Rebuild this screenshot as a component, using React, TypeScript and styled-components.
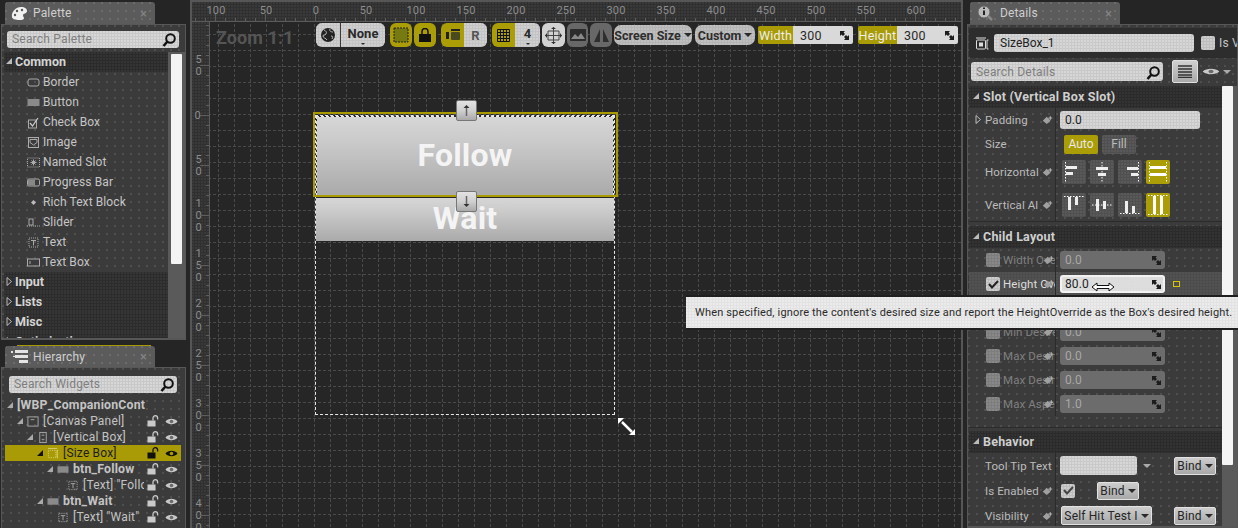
import React from "react";
import styled, { createGlobalStyle, css } from "styled-components";

const Global = createGlobalStyle`
  html, body { margin: 0; padding: 0; background: #252525; }
  body { font-family: Roboto, "Liberation Sans", sans-serif; }
  #root { width: 1238px; height: 528px; overflow: hidden; }
`;

const speckle = css`
  background-image: radial-gradient(circle at 1px 1px, rgba(255,255,255,.16) 0.6px, transparent 0.9px);
  background-size: 8px 8px;
`;
const weave = (c: string) => css`
  background-image: radial-gradient(circle at 1px 1px, ${c} 0.6px, transparent 0.9px);
  background-size: 3px 3px;
`;

const Root = styled.div`
  position: relative;
  width: 1238px; height: 528px; overflow: hidden;
  background: #252525;
  display: grid;
  grid-template-columns: 186px 4px 773px 3px 272px;
`;
const Column = styled.div`
  display: flex; flex-direction: column; height: 528px; overflow: hidden; min-width: 0;
`;
const TabBar = styled.div<{ $top: number; $left: number; $h?: number; $focus?: boolean }>`
  flex: none; position: relative;
  margin: ${p => p.$top}px 0 0 ${p => p.$left}px;
  width: 150px; height: ${p => p.$h ?? 22}px; box-sizing: border-box;
  background-color: #5b5b5b;
  ${speckle}
  border-radius: 3px 3px 0 0;
  display: flex; align-items: center; padding: 0 8px 0 6px; gap: 5px;
  color: #cfcfcf; font-size: 12px; letter-spacing: .15px;
  ${p => p.$focus && css`
    &::before { content: ""; position: absolute; left: 12px; right: 4px; top: -1px; height: 1px; background: #a89a00; }
  `}
`;
const TabLabel = styled.span` flex: 1; `;
const TabClose = styled.span` color: #858585; font-size: 13px; line-height: 1; `;
const Panel = styled.div<{ $h?: number; $ml?: number }>`
  flex: none; box-sizing: border-box;
  margin-left: ${p => p.$ml ?? 1}px;
  height: ${p => p.$h}px;
  background-color: #3b3b3b;
  ${speckle}
  border: 1px solid #575757; border-bottom-width: 2px;
  position: relative; overflow: hidden;
`;
const SearchBox = styled.div<{ $ml: number; $w: number; $mt: number; $h?: number; $pb?: number }>`
  margin: ${p => p.$mt}px 0 0 ${p => p.$ml}px;
  width: ${p => p.$w}px; height: ${p => p.$h ?? 17}px; box-sizing: border-box; flex: none;
  background-color: #c8c8c8;
  ${weave("#e0e0e0")}
  border-radius: 3px;
  display: flex; align-items: center; justify-content: space-between;
  padding: 0 2px ${p => p.$pb ?? 2}px 5px;
  color: #7f7f7f; font-size: 12px; letter-spacing: .2px;
`;

/* ---------- palette ---------- */
const PaletteBody = styled.div`
  display: flex; margin: 4px 0 0 2px; height: 286px; overflow: hidden;
`;
const PaletteList = styled.div` width: 164px; flex: none; `;
const CategoryRow = styled.div<{ $open?: boolean }>`
  height: 20px; display: flex; align-items: center; gap: 2px; padding: 0 0 2px 1px; box-sizing: border-box;
  font-size: 12.5px; font-weight: 700; color: #d4d4d4;
  background-color: ${p => (p.$open ? "#2b2b2b" : "#2c2c2c")};
  ${weave("#3a3a3a")}
`;
const PaletteItem = styled.div`
  height: 20px; display: flex; align-items: center; padding-left: 23px; gap: 3px;
  font-size: 12px; color: #c6c6c6; letter-spacing: .1px;
`;
const IconSlot = styled.span<{ $w?: number }>`
  width: ${p => p.$w ?? 13}px; height: 14px; flex: none; display: inline-flex; align-items: center; justify-content: center;
`;
const ScrollTrack = styled.div<{ $w: number; $flush?: boolean }>`
  flex: 1; min-width: 0; background: #5a5a5a; box-sizing: border-box;
  padding: ${p => (p.$flush ? "0" : "2px 0 0 3px")};
  width: ${p => p.$w}px;
`;
const ScrollThumb = styled.div<{ $h: number; $w?: number }>`
  width: ${p => p.$w ?? 11}px; height: ${p => p.$h}px; background: #f4f4f4; border-radius: 1px;
`;

/* ---------- hierarchy ---------- */
const TreeList = styled.div` margin: 4px 0 0 3px; width: 176px; `;
const TreeRow = styled.div<{ $sel?: boolean }>`
  height: 16px; display: flex; align-items: center; padding-right: 3px;
  font-size: 12px; color: ${p => (p.$sel ? "#1d1d1d" : "#c4c4c4")};
  background: ${p => (p.$sel ? "#a99b05" : "transparent")};
`;
const TreeTwist = styled.span<{ $lvl: number }>`
  margin-left: ${p => 1 + 10 * p.$lvl}px; display: inline-flex; flex: none; width: 8px; justify-content: center;
  margin-right: 3px;
`;
const TreeName = styled.span<{ $bold?: boolean; $gap: number }>`
  flex: 1; min-width: 0; white-space: nowrap; overflow: hidden; margin: 0 3px 0 ${p => p.$gap}px;
  font-weight: ${p => (p.$bold ? 700 : 400)};
  font-size: ${p => (p.$bold ? 12.3 : 12)}px;
  letter-spacing: .2px;
`;
const TreeActions = styled.span` display: inline-flex; gap: 6px; flex: none; align-items: center; `;

/* ---------- canvas ---------- */
const Canvas = styled.div`
  display: grid; grid-template-columns: 18px 1fr; grid-template-rows: 20px 1fr;
  height: 528px; box-sizing: border-box; border: 2px solid #565656; border-bottom: 0;
  background: #262626; overflow: hidden; position: relative;
`;
const RulerCorner = styled.div`
  background-color: #333;
  border-right: 1px solid #555; border-bottom: 1px solid #555;
  position: relative;
  &::before {
    content: ""; position: absolute; left: 0; top: 0;
    border-style: solid; border-width: 7px 7px 0 0;
    border-color: #a89a00 transparent transparent transparent;
  }
`;
const rulerDots = "radial-gradient(circle at 1px 1px, #3f3f3f 0.6px, transparent 0.9px)";
const rulerBase = css`
  background-color: #303030; color: #8c8c8c; font-size: 11px; overflow: hidden;
`;
const TopRuler = styled.div`
  ${rulerBase}
  grid-column: 2;
  margin-left: -18px;
  display: flex;
  position: relative;
  border-bottom: 1px solid #5a5a5a;
  background-image: ${rulerDots};
  background-size: 3px 3px;
  z-index: 1;
`;
const Tick = styled.i<{ $major?: boolean; $x: number }>`
  position: absolute; bottom: 0; left: ${p => p.$x}px; width: 1px; height: ${p => (p.$major ? 7 : 3)}px; background: #5d5d5d;
`;
const TopRulerLabel = styled.span<{ $first?: boolean }>`
  width: 50px; flex: none; text-align: center; line-height: 17px;
  letter-spacing: .1px;
  ${p => p.$first && "margin-left: -1px;"}
`;
const LeftRuler = styled.div`
  ${rulerBase}
  position: relative;
  display: flex; flex-direction: column; align-items: center; padding-top: 19px;
  border-right: 1px solid #5a5a5a; box-sizing: border-box;
  background-image: ${rulerDots};
  background-size: 3px 3px;
`;
const LeftTick = styled.i<{ $major?: boolean; $y: number }>`
  position: absolute; right: 0; top: ${p => p.$y}px; height: 1px; width: ${p => (p.$major ? 9 : 3)}px; background: #5d5d5d;
`;
const LeftRulerLabel = styled.span`
  height: 50px; flex: none; width: 8px; margin-left: -4px; display: flex; align-items: center; text-align: center;
  word-break: break-all; line-height: 12px;
`;
const Viewport = styled.div`
  position: relative; overflow: hidden;
`;
const GridArt = styled.svg` position: absolute; inset: 0; width: 100%; height: 100%; `;
const Toolbar = styled.div`
  position: absolute; left: 6px; top: 1px; right: 0; display: flex; align-items: center; height: 24px;
`;
const ZoomText = styled.span`
  width: 100px; flex: none; font-size: 18px; font-weight: 700; color: #555; letter-spacing: .1px; margin-top: 4px;
`;
const BtnGroup = styled.div<{ $ml: number }>`
  display: flex; margin-left: ${p => p.$ml}px; height: 24px; border-radius: 6px; overflow: hidden; flex: none;
`;
const ToolBtn = styled.div<{ $w: number; $kind?: "on" | "dim" | "off"; $cap?: boolean; $plain?: boolean; $divider?: boolean; $soft?: boolean }>`
  width: ${p => p.$w}px; height: 24px; flex: none; position: relative; box-sizing: border-box;
  display: flex; align-items: center; justify-content: center;
  font-size: 13px; font-weight: 700; color: ${p => (p.$soft ? "#555" : "#2a2a2a")};
  ${p => p.$cap && "padding-bottom: 4px;"}
  ${p => p.$divider && "border-left: 1px solid #3a3a3a;"}
  background-color: ${p => (p.$kind === "on" ? "#ab9d05" : p.$kind === "dim" ? "#686868" : p.$plain ? "#d2d2d2" : "#c4c4c4")};
  ${p => (!p.$kind && !p.$plain ? weave("#d6d6d6") : "")}
`;
const Caret = styled.span<{ $c?: string; $ml?: number }>`
  display: inline-block; width: 0; height: 0; margin-left: ${p => p.$ml ?? 2}px; flex: none;
  border-left: 4px solid transparent; border-right: 4px solid transparent;
  border-top: 4px solid ${p => p.$c ?? "#2a2a2a"};
`;
const SmallCaret = styled.span`
  position: absolute; bottom: 2px; left: 50%; margin-left: -2px; width: 0; height: 0;
  border-left: 2px solid transparent; border-right: 2px solid transparent; border-top: 2px solid #2a2a2a;
`;
const Pill = styled.div<{ $w: number; $ml: number }>`
  width: ${p => p.$w}px; margin-left: ${p => p.$ml}px; height: 20px; border-radius: 7px; flex: none;
  background-color: #b4b4b4; ${weave("#c6c6c6")}
  display: flex; align-items: center; justify-content: center; gap: 1px; white-space: nowrap;
  font-size: 12.5px; font-weight: 700; color: #2d2d2d;
`;
const SizeField = styled.div<{ $ml: number; $lw: number; $w: number }>`
  display: grid; grid-template-columns: ${p => p.$lw}px ${p => p.$w}px; margin-left: ${p => p.$ml}px;
  height: 18px; border-radius: 2px; overflow: hidden; flex: none;
  font-size: 12.5px; letter-spacing: .2px;
`;
const SizeLabel = styled.span`
  background: #a99b05; color: #eee; display: flex; align-items: center; justify-content: center;
`;
const SizeValue = styled.span`
  background: #d9d9d9; color: #2a2a2a; display: flex; align-items: center; justify-content: space-between;
  padding: 0 4px 0 7px;
`;

const DesignBox = styled.div`
  position: absolute; left: 105px; top: 93px; width: 300px; height: 300px; box-sizing: border-box;
  border: 1px dashed #e8e8e8;
  display: flex; flex-direction: column;
`;
const GameButton = styled.div<{ $h: number; $fs: number; $pb: number }>`
  height: ${p => p.$h}px; flex: none; box-sizing: border-box; padding-bottom: ${p => p.$pb}px;
  background: linear-gradient(#d6d6d6 0%, #cdcdcd 25%, #bdbdbd 60%, #aaa 100%);
  display: flex; align-items: center; justify-content: center;
  color: #f4f4f4; font-weight: 700; font-size: ${p => p.$fs}px; letter-spacing: .2px;
`;
const FollowSlot = styled.div`
  height: 80px; flex: none; display: flex; flex-direction: column; box-sizing: border-box;
  border: 1px dashed #e8e8e8; margin-bottom: 2px;
`;
const Selection = styled.div`
  position: absolute; left: 103px; top: 90px; width: 305px; height: 85px; box-sizing: border-box;
  border: 2px solid #a89a00; pointer-events: none;
`;
const Handle = styled.div<{ $top: number }>`
  position: absolute; left: 246px; top: ${p => p.$top}px; width: 21px; height: 21px; box-sizing: border-box;
  background: linear-gradient(#e2e2e2, #d0d0d0 50%, #a9a9a9);
  border: 1px solid #777; border-radius: 2px;
  display: flex; align-items: center; justify-content: center;
`;
const ResizeArt = styled.svg`
  position: absolute; left: 408px; top: 396px;
`;

/* ---------- details ---------- */
const NameRow = styled.div`
  margin: 3px 0 0 1px; height: 30px; border-radius: 3px 0 0 3px; background: #2d2d2d;
  display: flex; align-items: center; padding-left: 6px; gap: 4px; overflow: hidden;
`;
const NameInput = styled.div`
  width: 200px; height: 18px; flex: none; box-sizing: border-box; border-radius: 3px;
  background-color: #c9c9c9; ${weave("#dedede")}
  font-size: 12px; color: #222; display: flex; align-items: center; padding-left: 6px;
`;
const CheckBox = styled.span<{ $on?: boolean; $dim?: boolean; $ml?: number }>`
  width: 14px; height: 14px; flex: none; display: inline-flex; align-items: center; justify-content: center; border-radius: 2px;
  margin-left: ${p => p.$ml ?? 0}px;
  background-color: ${p => (p.$dim ? "#7d7d7d" : "#bdbdbd")};
  ${p => weave(p.$dim ? "#8f8f8f" : "#d6d6d6")}
`;
const ClipLabel = styled.span<{ $c?: string; $fs?: number }>`
  white-space: nowrap; font-size: ${p => p.$fs ?? 12}px; color: ${p => p.$c ?? "#c4c4c4"}; letter-spacing: .15px;
`;
const SearchRow = styled.div`
  display: flex; align-items: center; height: 23px; margin-top: 2px;
`;
const ViewBtn = styled.div`
  width: 26px; height: 23px; margin-left: 9px; flex: none; box-sizing: border-box;
  background: linear-gradient(#cfcfcf, #a9a9a9); border: 1px solid #e0e0e0; border-radius: 2px;
  display: flex; align-items: center; justify-content: center;
`;
const EyeWrap = styled.div` display: flex; align-items: center; margin-left: 4px; gap: 1px; `;
const DetailsBody = styled.div`
  display: flex; margin-top: 3px; margin-left: 1px; height: 442px; overflow: hidden;
`;
const DetailsMain = styled.div` width: 253px; flex: none; `;
const Section = styled.section<{ $pb?: number; $mb?: number }>`
  padding-bottom: ${p => p.$pb ?? 0}px;
  border-bottom: 1px solid #2b2b2b; margin-bottom: ${p => p.$mb ?? 4}px;
`;
const SectionHead = styled.div`
  height: 22px; display: flex; align-items: center; gap: 3px; padding: 0 0 2px 3px; box-sizing: border-box;
  background-color: #2b2b2b; ${weave("#383838")}
  font-size: 12.5px; font-weight: 700; color: #cfcfcf; letter-spacing: .2px;
`;
const PropRow = styled.div<{ $h?: number; $hi?: boolean }>`
  display: grid; grid-template-columns: 87px 1fr; height: ${p => p.$h ?? 24}px;
  ${p => p.$hi && css`background-color: #4c4c4c; ${weave("#565656")}`}
`;
const PropLabel = styled.div<{ $pl?: number; $dim?: boolean; $hi?: boolean }>`
  position: relative; display: flex; align-items: center; gap: 3px; overflow: hidden;
  padding-left: ${p => p.$pl ?? 16}px; border-right: 1px solid #2a2a2a;
  font-size: 11.5px; white-space: nowrap; letter-spacing: .1px;
  color: ${p => (p.$dim ? "#808080" : p.$hi ? "#dcdcdc" : "#bcbcbc")};
`;
const Reset = styled.span<{ $r?: number }>`
  position: absolute; right: ${p => p.$r ?? 2}px; top: 50%; margin-top: -5px; height: 10px; display: flex;
`;
const Twist = styled.span` position: absolute; left: 5px; top: 50%; margin-top: -6px; display: flex; `;
const PropValue = styled.div<{ $gap?: number }>`
  display: flex; align-items: center; padding-left: 4px; gap: ${p => p.$gap ?? 0}px; position: relative;
`;
const NumInput = styled.div<{ $w: number; $tone?: "lit" | "dim" | "hi"; $h?: number }>`
  width: ${p => p.$w}px; height: ${p => p.$h ?? 18}px; box-sizing: border-box; border-radius: 3px; flex: none;
  display: flex; align-items: center; justify-content: space-between; padding: 0 4px 0 5px;
  font-size: 12px; letter-spacing: .1px;
  color: ${p => (p.$tone === "dim" ? "#323232" : "#222")};
  background-color: ${p => (p.$tone === "dim" ? "#6c6c6c" : p.$tone === "hi" ? "#dcdcdc" : "#c9c9c9")};
  ${p => (p.$tone === "hi" ? "border: 2px solid #f2f2f2; padding-left: 3px; padding-right: 2px;" : "")}
  ${p => (p.$tone === "dim" ? "color: #a8a8a8;" : weave("#dedede"))}
`;
const SizeToggle = styled.div<{ $on?: boolean; $ml?: number }>`
  width: 34px; height: 19px; margin-left: ${p => p.$ml ?? 0}px; border-radius: 2px; flex: none;
  display: flex; align-items: center; justify-content: center; font-size: 12px;
  color: ${p => (p.$on ? "#e9e9e9" : "#bcbcbc")};
  background-color: ${p => (p.$on ? "#ab9d05" : "#505050")};
  ${p => !p.$on && weave("#5e5e5e")}
`;
const AlignBtn = styled.div<{ $on?: boolean }>`
  width: 24px; height: 24px; flex: none; border-radius: 2px; display: flex;
  background-color: ${p => (p.$on ? "#ab9d05" : "#505050")};
  ${p => !p.$on && weave("#5e5e5e")}
`;
const AlignRow = styled.div` display: flex; gap: 4px; margin-left: 2px; `;
const BindBtn = styled.div<{ $w?: number; $ml?: number; $h?: number }>`
  width: ${p => p.$w ?? 42}px; height: ${p => p.$h ?? 18}px; box-sizing: border-box; flex: none;
  margin-left: ${p => p.$ml ?? 0}px;
  border: 1px solid #e2e2e2; border-radius: 2px;
  background: linear-gradient(#cdcdcd, #a8a8a8);
  display: flex; align-items: center; justify-content: center; gap: 1px;
  font-size: 12px; color: #252525; letter-spacing: .15px; white-space: nowrap;
`;
const TooltipBox = styled.div`
  position: absolute; left: 686px; top: 297px; width: 552px; height: 31px; box-sizing: border-box;
  background-color: #e2e2e2; ${weave("#f0f0f0")}
  box-shadow: 0 -2px 0 #1f1f1f, 0 2px 0 #1f1f1f;
  color: #2b2b2b; font-size: 11px; letter-spacing: .16px; line-height: 31px; padding-left: 9px; white-space: nowrap;
`;
const CursorArt = styled.svg` position: absolute; left: 1091px; top: 281px; `;
const KeyMark = styled.span`
  position: absolute; left: 117px; top: 9px; width: 7px; height: 6px; box-sizing: border-box;
  border: 1px solid #d6c800; border-left-style: dashed;
`;

/* ---------- icons ---------- */
const Tri = ({ open, c = "#bbb" }: { open?: boolean; c?: string }) =>
  open ? (
    <svg width="8" height="8" viewBox="0 0 8 8"><path d="M7 1v6H1z" fill={c} /></svg>
  ) : (
    <svg width="8" height="11" viewBox="0 0 8 11"><path d="M2 1.500v8l4.500-4z" fill="none" stroke={c} /></svg>
  );
const Search = () => (
  <svg width="16" height="16" viewBox="0 0 16 16" style={{ marginBottom: -2 }}>
    <circle cx="9.500" cy="6.500" r="4.300" fill="none" stroke="#111" strokeWidth="2" />
    <path d="M6.500 9.500 2.500 14" stroke="#111" strokeWidth="2.600" />
  </svg>
);
const Eye = ({ c = "#c9c9c9", s = 13 }: { c?: string; s?: number }) => (
  <svg width={s} height="9" viewBox="0 0 13 9" preserveAspectRatio="none">
    <path d="M.5 4.500C3 .8 10 .8 12.500 4.500 10 8.200 3 8.200.5 4.500z" fill={c} />
    <circle cx="6.500" cy="4.500" r="1.800" fill={c === "#111" ? "#a99b05" : "#6a6a6a"} />
  </svg>
);
const Lock = ({ c = "#c9c9c9" }: { c?: string }) => (
  <svg width="12" height="12" viewBox="0 0 12 12">
    <rect x="0.500" y="5.500" width="8" height="6" fill={c} />
    <path d="M6 5.500V3a2.300 2.300 0 0 1 4.600 0v1.500" fill="none" stroke={c} strokeWidth="1.300" />
  </svg>
);
const ArrowSq = ({ c = "#1c1c1c" }: { c?: string }) => (
  <svg width="9" height="9" viewBox="0 0 9 9">
    <path d="M0 0h5L3.600 1.500 5 3 3 5 1.500 3.600 0 5zM9 9H4l1.400-1.500L4 6l2-2 1.500 1.400L9 4z" fill={c} />
  </svg>
);
const Reset1 = () => (
  <svg width="11" height="10" viewBox="0 0 14 12">
    <path d="M1 7l5-5 5 5-5 4z" fill="#a0a0a0" />
    <path d="M10.500 1v5M8 3.500h5" stroke="#d0d0d0" />
  </svg>
);
const W = ({ k, c = "#aaa" }: { k: string; c?: string }) => {
  const sw = { fill: "none", stroke: c, strokeWidth: 1 } as const;
  return (
    <svg width="13" height="13" viewBox="0 0 13 13">
      {k === "border" && <rect x="1" y="3" width="11" height="7" rx="2" {...sw} />}
      {k === "button" && <rect x="0.500" y="3" width="12" height="7" fill="#8a8a8a" />}
      {k === "check" && <g><rect x="1.500" y="4" width="8" height="8" {...sw} /><path d="M3 7l2.500 3L11 2" stroke="#ccc" strokeWidth="1.200" fill="none" /></g>}
      {k === "image" && <g><rect x="1.500" y="1.500" width="10" height="10" {...sw} /><path d="M3 3.500h7v3l-3.500 2.500L3 6.500z" {...sw} /></g>}
      {k === "slot" && <g><rect x="0.500" y="2" width="12" height="9" {...sw} strokeDasharray="1 1" /><path d="M6.500 3.500v6M3.500 6.500h6M4.500 4.500l4 4M8.500 4.500l-4 4" stroke={c} /></g>}
      {k === "progress" && <g><rect x="0.500" y="3" width="12" height="7" rx="1.500" {...sw} /><rect x="1" y="3.500" width="7" height="6" fill="#888" /></g>}
      {k === "rich" && <path d="M6.500 4 9 6.500 6.500 9 4 6.500z" fill="#bbb" />}
      {k === "slider" && <g><path d="M0 10h13" {...sw} strokeDasharray="1 1" /><rect x="2" y="3" width="4" height="6" {...sw} /></g>}
      {k === "text" && <g><rect x="2" y="2" width="9" height="9" {...sw} strokeDasharray="1 1" /><path d="M4 4.500h5M6.500 4.500v5" stroke={c} /></g>}
      {k === "textbox" && <g><rect x="0.500" y="3" width="12" height="7" {...sw} /><path d="M3 5v3" stroke={c} /></g>}
      {k === "canvas" && <g><rect x="1" y="1.500" width="11" height="10" {...sw} /><path d="M4 4.500h4" stroke={c} /></g>}
      {k === "vbox" && <g><rect x="3" y="1" width="7" height="11" {...sw} /><path d="M5 4h3M5 8.500h3" stroke={c} /></g>}
      {k === "size" && <g><path d="M1 1h10" stroke="#d9d07a" /><rect x="1.500" y="3" width="8" height="8" fill="none" stroke="#d9d07a" strokeDasharray="1 1" /><path d="M12 3h-1v8h1" stroke="#e6dc80" fill="none" /></g>}
      {k === "namesize" && <g><path d="M0 1h10" stroke="#ddd" /><rect x="0.500" y="3" width="9" height="9" rx="1" fill="none" stroke="#ddd" /><rect x="3" y="5.500" width="4" height="4" fill="#ddd" /><path d="M12.500 3H11v9h1.500" stroke="#ddd" fill="none" /></g>}
    </svg>
  );
};

const Al = ({ d }: { d: string }) => {
  const H = d[0] === "h";
  const bars: Record<string, React.ReactNode> = {
    hl: <path d="M4 6h11v3H4zM4 12h7v3H4z" fill="#eee" />,
    hc: <path d="M6 7h12v3H6zM8 13h8v3H8z" fill="#eee" />,
    hr: <path d="M9 7h11v3H9zM13 13h7v3h-7z" fill="#eee" />,
    hf: <path d="M4 6h16v3H4zM4 13h16v3H4z" fill="#fff" />,
    vt: <path d="M6 4h3v13H6zM13 4h3v8h-3z" fill="#eee" />,
    vc: <path d="M6 6h3v12H6zM13 8h3v8h-3z" fill="#eee" />,
    vb: <path d="M7 8h3v12H7zM14 13h3v7h-3z" fill="#eee" />,
    vf: <path d="M7 3h3v18H7zM14 3h3v18h-3z" fill="#fff" />,
  };
  const guide = H
    ? d === "hl" ? "M3.500 2v20" : d === "hc" ? "M12 2v20" : d === "hr" ? "M20.500 2v20" : "M3.500 2v20M20.500 2v20"
    : d === "vt" ? "M2 3.500h20" : d === "vc" ? "M2 12h20" : d === "vb" ? "M2 20.500h20" : "M2 2.500h20M2 21.500h20";
  return (
    <svg width="24" height="24" viewBox="0 0 24 24">
      {bars[d]}
      <path d={guide} stroke="#fff" strokeDasharray="1.500 1.500" fill="none" />
    </svg>
  );
};

const palette = [
  ["border", "Border"], ["button", "Button"], ["check", "Check Box"], ["image", "Image"], ["slot", "Named Slot"],
  ["progress", "Progress Bar"], ["rich", "Rich Text Block"], ["slider", "Slider"], ["text", "Text"], ["textbox", "Text Box"],
];
const tree = [
  { lvl: 0, tw: 1, icon: "", name: "[WBP_CompanionCont", bold: true, acts: false },
  { lvl: 1, tw: 1, icon: "canvas", name: "[Canvas Panel]" },
  { lvl: 2, tw: 1, icon: "vbox", name: "[Vertical Box]" },
  { lvl: 3, tw: 1, icon: "size", name: "[Size Box]", sel: true },
  { lvl: 4, tw: 1, icon: "button", name: "btn_Follow", bold: true },
  { lvl: 5, tw: 0, icon: "text", name: '[Text] "Follow"' },
  { lvl: 3, tw: 1, icon: "button", name: "btn_Wait", bold: true },
  { lvl: 4, tw: 0, icon: "text", name: '[Text] "Wait"' },
];
const hLabels = [100, 50, 0, 50, 100, 150, 200, 250, 300, 350, 400, 450, 500, 550, 600];
const vLabels = [50, 0, 50, 100, 150, 200, 250, 300, 350, 400];
const hTicks = Array.from({ length: 77 }, (_, i) => i * 10 + 3);
const vTicks = Array.from({ length: 51 }, (_, i) => i * 10 + 3);
const gridSteps = [0, 16, 32, 48, 64];
const child = [
  { t: "Width Override", dim: true, v: "0.0" },
  { t: "Height Override", hi: true, v: "80.0", on: true },
  { t: "Min Desired Width", dim: true, v: "0.0" },
  { t: "Min Desired Height", dim: true, v: "0.0" },
  { t: "Max Desired Width", dim: true, v: "0.0" },
  { t: "Max Desired Height", dim: true, v: "0.0" },
  { t: "Max Aspect Ratio", dim: true, v: "1.0" },
];

const PaletteGlyph = () => (
  <svg width="17" height="15" viewBox="0 0 17 15">
    <path d="M1 11C0 6 5 1 10 1c4 0 6 2 6 4 0 3-4 2-4 4 0 2 1 2 1 3 0 2-3 2-5 2-3 0-7-1-7-3z" fill="#f1f1f1" />
    <circle cx="6" cy="5" r="1.200" fill="#555" /><circle cx="11" cy="4" r="1.200" fill="#555" /><circle cx="4" cy="9" r="1.200" fill="#555" />
  </svg>
);
const HierGlyph = () => (
  <svg width="17" height="13" viewBox="0 0 17 13">
    <path d="M0 1h2v2H0zM4 0h13v3H4zM4 5h13v3H4zM8 10h9v3H8zM2 6h2v1H2z" fill="#e4e4e4" />
  </svg>
);
const InfoGlyph = () => (
  <svg width="19" height="17" viewBox="0 0 19 17">
    <circle cx="8" cy="7" r="6" fill="#bbb" stroke="#666" />
    <path d="M7 5.500h2V10H7zM7 2.500h2v1.500H7z" fill="#222" />
    <path d="M12 11l4 4" stroke="#888" strokeWidth="2.500" />
  </svg>
);
const X = () => <TabClose>×</TabClose>;
const Check = ({ c }: { c: string }) => (
  <svg width="11" height="9" viewBox="0 0 11 9"><path d="M1 4l3 3.500L10 1" stroke={c} strokeWidth="2" fill="none" /></svg>
);

export default function App() {
  return (
    <Root>
      <Global />
      <Column>
        <TabBar $top={2} $left={5}><PaletteGlyph /><TabLabel>Palette</TabLabel><X /></TabBar>
        <Panel $h={316}>
          <SearchBox $ml={5} $w={172} $mt={6}>Search Palette<Search /></SearchBox>
          <PaletteBody>
            <PaletteList>
              <CategoryRow $open><Tri open c="#bbb" />Common</CategoryRow>
              {palette.map(([k, t]) => (
                <PaletteItem key={t}><IconSlot $w={13}><W k={k} /></IconSlot>{t}</PaletteItem>
              ))}
              {["Input", "Lists", "Misc", "Optimization"].map(t => (
                <CategoryRow key={t}><Tri />{t}</CategoryRow>
              ))}
            </PaletteList>
            <ScrollTrack $w={17}><ScrollThumb $h={210} /></ScrollTrack>
          </PaletteBody>
        </Panel>
        <TabBar $top={6} $left={5} $h={21} $focus><HierGlyph /><TabLabel>Hierarchy</TabLabel><X /></TabBar>
        <Panel $h={170}>
          <SearchBox $ml={7} $w={168} $mt={8}>Search Widgets<Search /></SearchBox>
          <TreeList>
            {tree.map(r => (
              <TreeRow key={r.name} $sel={r.sel}>
                <TreeTwist $lvl={r.lvl}>{r.tw ? <Tri open c={r.sel ? "#111" : "#aaa"} /> : null}</TreeTwist>
                {r.icon && <IconSlot $w={12}><W k={r.icon} c={r.sel ? "#d9d07a" : "#aaa"} /></IconSlot>}
                <TreeName $bold={r.bold} $gap={r.icon ? 4 : 0}>{r.name}</TreeName>
                {r.acts !== false && (
                  <TreeActions>
                    <Lock c={r.sel ? "#111" : "#c9c9c9"} />
                    <Eye c={r.sel ? "#111" : "#c9c9c9"} />
                  </TreeActions>
                )}
              </TreeRow>
            ))}
          </TreeList>
        </Panel>
      </Column>
      <div />
      <Canvas>
        <RulerCorner />
        <TopRuler>
          {hTicks.map(x => <Tick key={x} $x={x} $major={x % 50 === 23} />)}
          {hLabels.map((n, i) => <TopRulerLabel key={i} $first={i === 0}>{n}</TopRulerLabel>)}
        </TopRuler>
        <LeftRuler>
          {vTicks.map(y => <LeftTick key={y} $y={y} $major={y % 50 === 43} />)}
          {vLabels.map((n, i) => <LeftRulerLabel key={i}>{n}</LeftRulerLabel>)}
        </LeftRuler>
        <Viewport>
          <GridArt>
            <defs>
              <pattern id="g" x="8" y="12" width="80" height="80" patternUnits="userSpaceOnUse">
                {gridSteps.map(n => (
                  <path key={n} d={`M${n + 0.5} 0v80M0 ${n + 0.5}h80`} stroke="#4a4a4a" strokeDasharray="3 2" fill="none" />
                ))}
              </pattern>
            </defs>
            <rect width="100%" height="100%" fill="url(#g)" />
          </GridArt>
          <DesignBox>
            <FollowSlot><GameButton $h={78} $fs={32} $pb={2}>Follow</GameButton></FollowSlot>
            <GameButton $h={43} $fs={32} $pb={4}>Wait</GameButton>
          </DesignBox>
          <Selection />
          <Handle $top={78}>
            <svg width="9" height="13" viewBox="0 0 9 13"><path d="M4.500 12V3" stroke="#666" strokeWidth="1.500" /><path d="M1.500 4h6L4.500 1z" fill="#333" /></svg>
          </Handle>
          <Handle $top={169}>
            <svg width="9" height="13" viewBox="0 0 9 13"><path d="M4.500 1v9" stroke="#666" strokeWidth="1.500" /><path d="M1.500 9h6l-3 3z" fill="#333" /></svg>
          </Handle>
          <ResizeArt width="18" height="18" viewBox="0 0 18 18">
            <path d="M4 4l10 10" stroke="#fff" strokeWidth="2.500" />
            <path d="M0 0h6L0 6zM17 17h-6l6-6z" fill="#fff" />
          </ResizeArt>
          <Toolbar>
            <ZoomText>Zoom 1:1</ZoomText>
            <BtnGroup $ml={0}>
              <ToolBtn $w={24}>
                <svg width="16" height="16" viewBox="0 0 16 16"><circle cx="8" cy="8" r="7" fill="#222" /><path d="M4 3c2 1 3 2 2 4S3 7 3 9s3 2 4 4M10 2c-1 2 1 3 3 3M11 9c2 0 2 1 1 3" stroke="#bbb" fill="none" /></svg>
              </ToolBtn>
              <ToolBtn $w={45} $cap $divider>None<SmallCaret /></ToolBtn>
            </BtnGroup>
            <BtnGroup $ml={5}>
              <ToolBtn $w={22} $kind="on"><svg width="16" height="16" viewBox="0 0 16 16"><rect x="1" y="1" width="14" height="14" fill="#777a10" stroke="#222" strokeDasharray="2 1" /></svg></ToolBtn>
            </BtnGroup>
            <BtnGroup $ml={2}>
              <ToolBtn $w={22} $kind="on"><svg width="12" height="14" viewBox="0 0 12 14"><path d="M0 6h12v8H0z" fill="#111" /><path d="M3 6V3.500a3 3 0 0 1 6 0V6" stroke="#111" strokeWidth="1.500" fill="none" /></svg></ToolBtn>
            </BtnGroup>
            <BtnGroup $ml={5}>
              <ToolBtn $w={23} $kind="on"><svg width="14" height="12" viewBox="0 0 14 12"><path d="M0 3h3v7H0z" fill="#222" /><path d="M5 0h9v2H5z" fill="#222" /><rect x="5" y="3" width="9" height="8" rx="1" fill="#4a4a22" /></svg></ToolBtn>
              <ToolBtn $w={23} $soft>R</ToolBtn>
            </BtnGroup>
            <BtnGroup $ml={5}>
              <ToolBtn $w={23} $kind="on"><svg width="13" height="13" viewBox="0 0 13 13"><path d="M.5.500h12v12H.5zM3.500.5v12M6.500.5v12M9.500.5v12M.5 3.500h12M.5 6.500h12M.5 9.500h12" stroke="#111" fill="none" /></svg></ToolBtn>
              <ToolBtn $w={25} $cap>4<SmallCaret /></ToolBtn>
            </BtnGroup>
            <BtnGroup $ml={2}>
              <ToolBtn $w={23} $plain><svg width="17" height="17" viewBox="0 0 17 17"><path d="M8.500 0v17M0 8.500h17M3 4h11v9H3z" stroke="#444" fill="none" /><path d="M6 2l2.500-2L11 2zM6 15l2.500 2L11 15zM2 6L0 8.500 2 11zM15 6l2 2.500L15 11z" fill="#333" /></svg></ToolBtn>
            </BtnGroup>
            <BtnGroup $ml={2}>
              <ToolBtn $w={21} $kind="dim"><svg width="16" height="12" viewBox="0 0 16 12"><path d="M.5.500h15v11H.5z" fill="#2c2c2c" stroke="#2c2c2c" /><path d="M1 10l4-5 3 3 3-4 4 6z" fill="#888" /></svg></ToolBtn>
            </BtnGroup>
            <BtnGroup $ml={2}>
              <ToolBtn $w={22} $kind="dim"><svg width="17" height="15" viewBox="0 0 17 15"><path d="M7 1v13H1zM10 1v13h6z" fill="#2f2f2f" /></svg></ToolBtn>
            </BtnGroup>
            <Pill $w={78} $ml={2}>Screen Size<Caret /></Pill>
            <Pill $w={60} $ml={3}>Custom<Caret /></Pill>
            <SizeField $ml={3} $lw={35} $w={60}><SizeLabel>Width</SizeLabel><SizeValue>300<ArrowSq /></SizeValue></SizeField>
            <SizeField $ml={5} $lw={39} $w={61}><SizeLabel>Height</SizeLabel><SizeValue>300<ArrowSq /></SizeValue></SizeField>
          </Toolbar>
        </Viewport>
      </Canvas>
      <div />
      <Column>
        <TabBar $top={2} $left={4}><InfoGlyph /><TabLabel>Details</TabLabel><X /></TabBar>
        <Panel $h={504}>
          <NameRow>
            <IconSlot $w={15}><W k="namesize" /></IconSlot>
            <NameInput>SizeBox_1</NameInput>
            <CheckBox $ml={3} />
            <ClipLabel $c="#c4c4c4">Is Variable</ClipLabel>
          </NameRow>
          <SearchRow>
            <SearchBox $ml={3} $w={192} $mt={0} $h={19} $pb={0}>Search Details<Search /></SearchBox>
            <ViewBtn>
              <svg width="14" height="13" viewBox="0 0 14 13"><path d="M0 1h14M0 4h14M0 7h14M0 10h14M0 12.500h14" stroke="#333" strokeWidth="1.500" /></svg>
            </ViewBtn>
            <EyeWrap><Eye s={18} /><Caret $c="#aaa" /></EyeWrap>
          </SearchRow>
          <DetailsBody>
            <DetailsMain>
              <Section>
                <SectionHead><Tri open />Slot (Vertical Box Slot)</SectionHead>
                <PropRow>
                  <PropLabel><Twist><Tri /></Twist>Padding<Reset><Reset1 /></Reset></PropLabel>
                  <PropValue><NumInput $w={140}>0.0</NumInput></PropValue>
                </PropRow>
                <PropRow>
                  <PropLabel>Size</PropLabel>
                  <PropValue><SizeToggle $on $ml={4}>Auto</SizeToggle><SizeToggle $ml={4}>Fill</SizeToggle></PropValue>
                </PropRow>
                <PropRow $h={32}>
                  <PropLabel>Horizontal<Reset><Reset1 /></Reset></PropLabel>
                  <PropValue><AlignRow><AlignBtn><Al d="hl" /></AlignBtn><AlignBtn><Al d="hc" /></AlignBtn><AlignBtn><Al d="hr" /></AlignBtn><AlignBtn $on><Al d="hf" /></AlignBtn></AlignRow></PropValue>
                </PropRow>
                <PropRow $h={33}>
                  <PropLabel>Vertical Al<Reset><Reset1 /></Reset></PropLabel>
                  <PropValue><AlignRow><AlignBtn><Al d="vt" /></AlignBtn><AlignBtn><Al d="vc" /></AlignBtn><AlignBtn><Al d="vb" /></AlignBtn><AlignBtn $on><Al d="vf" /></AlignBtn></AlignRow></PropValue>
                </PropRow>
              </Section>
              <Section $pb={11} $mb={3}>
                <SectionHead><Tri open />Child Layout</SectionHead>
                {child.map(r => (
                  <PropRow key={r.t} $hi={r.hi}>
                    <PropLabel $pl={17} $dim={r.dim} $hi={r.hi}>
                      <CheckBox $dim={r.dim}>{r.on && <Check c="#222" />}</CheckBox>
                      {r.t}
                      <Reset $r={1}><Reset1 /></Reset>
                    </PropLabel>
                    <PropValue>
                      <NumInput $w={105} $tone={r.hi ? "hi" : "dim"}>{r.v}<ArrowSq /></NumInput>
                      {r.hi && <KeyMark />}
                    </PropValue>
                  </PropRow>
                ))}
              </Section>
              <Section>
                <SectionHead><Tri open />Behavior</SectionHead>
                <PropRow $h={25}>
                  <PropLabel>Tool Tip Text</PropLabel>
                  <PropValue>
                    <NumInput $w={77} $h={19} />
                    <Caret $c="#aaa" $ml={6} />
                    <BindBtn $ml={23}>Bind<Caret /></BindBtn>
                  </PropValue>
                </PropRow>
                <PropRow $h={25}>
                  <PropLabel>Is Enabled<Reset><Reset1 /></Reset></PropLabel>
                  <PropValue>
                    <CheckBox $ml={1}><Check c="#444" /></CheckBox>
                    <BindBtn $ml={22}>Bind<Caret /></BindBtn>
                  </PropValue>
                </PropRow>
                <PropRow $h={25}>
                  <PropLabel>Visibility<Reset><Reset1 /></Reset></PropLabel>
                  <PropValue>
                    <BindBtn $w={91} $ml={1} $h={19}>Self Hit Test I<Caret /></BindBtn>
                    <BindBtn $ml={22}>Bind<Caret /></BindBtn>
                  </PropValue>
                </PropRow>
              </Section>
            </DetailsMain>
            <ScrollTrack $w={15} $flush><ScrollThumb $h={379} /></ScrollTrack>
          </DetailsBody>
        </Panel>
      </Column>
      <TooltipBox>When specified, ignore the content's desired size and report the HeightOverride as the Box's desired height.</TooltipBox>
      <CursorArt width="24" height="12" viewBox="0 0 24 12">
        <path d="M1 6l5-4v2.500h12V2l5 4-5 4V7.500H6V10z" fill="#fff" stroke="#111" />
      </CursorArt>
    </Root>
  );
}
